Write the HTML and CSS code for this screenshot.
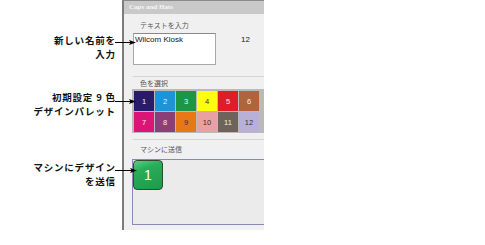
FILE: index.html
```html
<!DOCTYPE html>
<html lang="ja">
<head>
<meta charset="utf-8">
<link rel="stylesheet" href="styles.css">
</head>
<body>
<div class="figure">
  <div class="panel">
    <div class="titlebar">Caps and Hats</div>
    <div class="label label-first">テキストを入力</div>
    <div class="text-row">
      <div class="textbox">Wilcom Klosk</div>
      <div class="count">12</div>
    </div>
    <div class="sep sep-1"></div>
    <div class="label label-color">色を選択</div>
    <div class="palette">
      <div class="sw c1">1</div>
      <div class="sw c2">2</div>
      <div class="sw c3">3</div>
      <div class="sw c4 dark">4</div>
      <div class="sw c5">5</div>
      <div class="sw c6">6</div>
      <div class="sw c7">7</div>
      <div class="sw c8">8</div>
      <div class="sw c9 dark">9</div>
      <div class="sw c10 dark">10</div>
      <div class="sw c11">11</div>
      <div class="sw c12 dark">12</div>
    </div>
    <div class="sep sep-2"></div>
    <div class="label label-send">マシンに送信</div>
    <div class="sendbox">
      <div class="machine-btn">1</div>
    </div>
  </div>

  <div class="callout callout-1"><div class="cl">新しい名前を</div><div class="cl">入力</div></div>
  <div class="callout callout-2"><div class="cl">初期設定 9 色</div><div class="cl">デザインパレット</div></div>
  <div class="callout callout-3"><div class="cl">マシンにデザイン</div><div class="cl">を送信</div></div>

  <svg class="arrow arrow-1" width="22" height="7" viewBox="0 0 22 7"><line x1="0" y1="3.5" x2="16" y2="3.5" stroke="#000" stroke-width="1"/><path d="M21 3.5 L14 1 L15.5 3.5 L14 6 Z" fill="#000"/></svg>
  <svg class="arrow arrow-2" width="22" height="7" viewBox="0 0 22 7"><line x1="0" y1="3.5" x2="16" y2="3.5" stroke="#000" stroke-width="1"/><path d="M21 3.5 L14 1 L15.5 3.5 L14 6 Z" fill="#000"/></svg>
  <svg class="arrow arrow-3" width="23" height="7" viewBox="0 0 23 7"><line x1="0" y1="3.5" x2="17" y2="3.5" stroke="#000" stroke-width="1"/><path d="M22 3.5 L15 1 L16.5 3.5 L15 6 Z" fill="#000"/></svg>
</div>
</body>
</html>
```

FILE: styles.css
```css
html, body {
  margin: 0;
  padding: 0;
  background: #ffffff;
}

.figure {
  position: relative;
  width: 485px;
  height: 245px;
  font-family: "Noto Sans CJK JP", "Noto Sans", sans-serif;
}

.panel {
  margin-left: 122px;
  width: 140px;
  height: 229px;
  border-left: 2px solid #7c7c7c;
  border-top: 1px solid #8a8a8a;
  background: #f0f0f0;
  display: flex;
  flex-direction: column;
  overflow: hidden;
}

.titlebar {
  height: 13px;
  line-height: 13px;
  background: #c9c9c9;
  color: #f6f6f6;
  font-family: "Liberation Serif", serif;
  font-size: 7px;
  font-weight: bold;
  padding-left: 5px;
}

.label {
  height: 12px;
  line-height: 12px;
  font-size: 7px;
  color: #555555;
  margin-left: 16px;
}

.label-first { margin-top: 5px; }
.label-color { margin-top: 0px; }
.label-send { margin-top: 3px; }

.text-row {
  display: flex;
  align-items: flex-start;
  margin-top: 2px;
  margin-left: 9px;
}

.textbox {
  width: 80px;
  height: 30px;
  background: #ffffff;
  border: 1px solid #a8a8a8;
  border-top-color: #8a8a8a;
  font-family: "Liberation Sans", Arial, sans-serif;
  font-size: 8px;
  line-height: 11px;
  color: #111;
  padding-left: 1px;
}

.count {
  margin-left: 25px;
  margin-top: 2px;
  font-family: "Liberation Sans", Arial, sans-serif;
  font-size: 8px;
  color: #222;
}

.sep {
  height: 1px;
  background: #d4d4d4;
  margin-left: 9px;
}

.sep-1 { margin-top: 11px; }
.sep-2 { margin-top: 6px; }

.palette {
  margin-left: 8px;
  height: 44px;
  padding: 2px 0 0 2px;
  box-sizing: border-box;
  background: #bababa;
  display: grid;
  grid-template-columns: repeat(6, 20px);
  grid-template-rows: 20px 20px;
  gap: 1px;
  align-content: start;
}

.sw {
  display: flex;
  align-items: center;
  justify-content: center;
  font-family: "Liberation Sans", Arial, sans-serif;
  font-size: 7.5px;
  color: #f0f0f0;
}

.sw.dark { color: #333; }

.c1 { background: #2a1a6c; }
.c2 { background: #1a94da; }
.c3 { background: #1c9544; }
.c4 { background: #ffff10; }
.c5 { background: #de1e26; }
.c6 { background: #b0643c; }
.c7 { background: #dc1478; }
.c8 { background: #8c3e76; }
.c9 { background: #e67816; }
.c10 { background: #eaa0a2; }
.c11 { background: #6e625a; }
.c12 { background: #b8b0d6; color: #333; }

.sendbox {
  margin-top: 4px;
  margin-left: 8px;
  height: 64px;
  border: 1px solid #8a88b4;
  border-right: none;
  background: #ebebeb;
}

.machine-btn {
  width: 28px;
  height: 28px;
  border: 1px solid #2c4a34;
  border-radius: 4px;
  background: linear-gradient(160deg, #5cd084 0%, #2aac58 30%, #1e9a4a 100%);
  color: #ffffff;
  font-family: "Liberation Sans", Arial, sans-serif;
  font-size: 14px;
  line-height: 28px;
  text-align: center;
}

.callout {
  position: absolute;
  right: 370px;
  display: flex;
  flex-direction: column;
  align-items: flex-end;
  font-size: 9.5px;
  font-weight: bold;
  letter-spacing: 0.8px;
  color: #111;
  white-space: nowrap;
}

.cl {
  height: 14px;
  line-height: 14px;
  margin-right: -0.8px;
}

.callout-1 { top: 33px; }
.callout-2 { top: 90px; }
.callout-3 { top: 160px; }

.arrow {
  position: absolute;
  left: 115px;
}

.arrow-1 { top: 39px; }
.arrow-2 { top: 98px; }
.arrow-3 { top: 167px; }
```
